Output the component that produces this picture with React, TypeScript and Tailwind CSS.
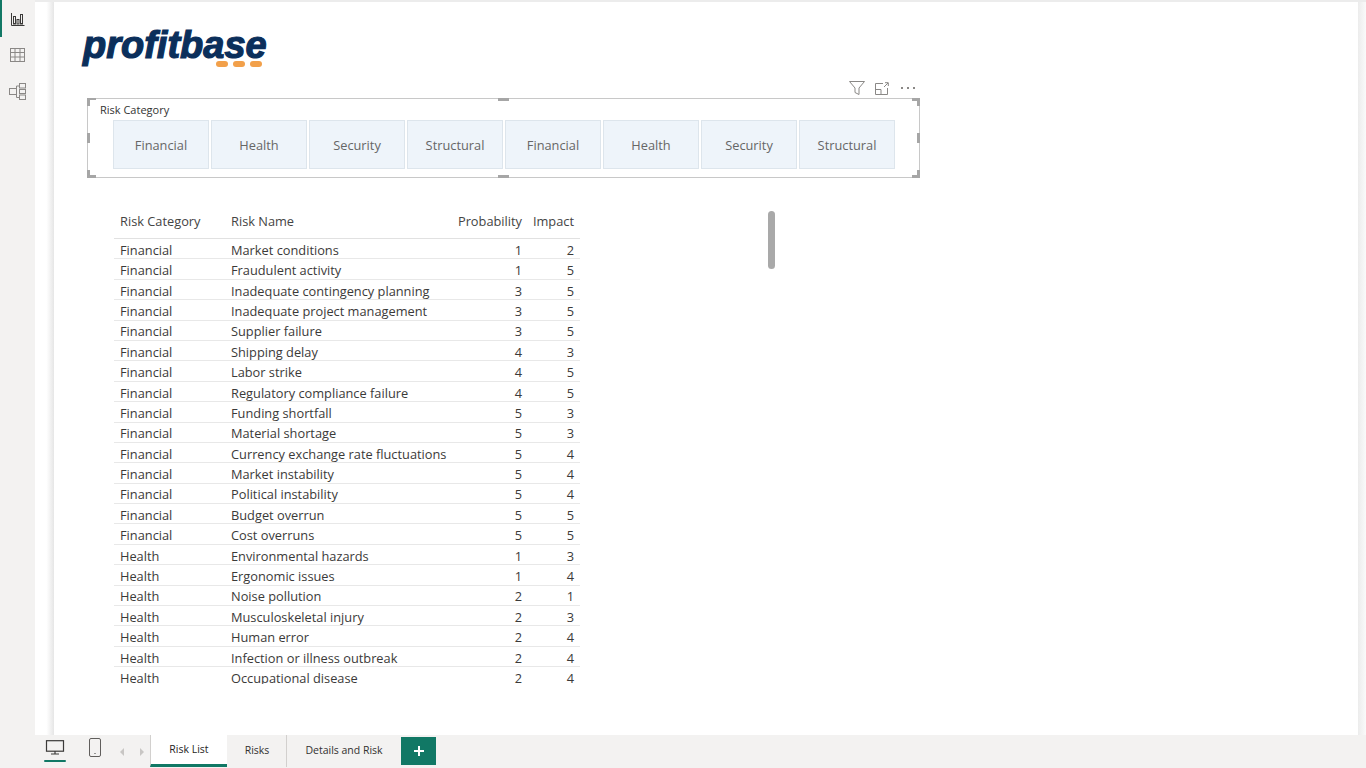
import React from "react";

const rows: [string, string, number, number][] = [
  ["Financial", "Market conditions", 1, 2],
  ["Financial", "Fraudulent activity", 1, 5],
  ["Financial", "Inadequate contingency planning", 3, 5],
  ["Financial", "Inadequate project management", 3, 5],
  ["Financial", "Supplier failure", 3, 5],
  ["Financial", "Shipping delay", 4, 3],
  ["Financial", "Labor strike", 4, 5],
  ["Financial", "Regulatory compliance failure", 4, 5],
  ["Financial", "Funding shortfall", 5, 3],
  ["Financial", "Material shortage", 5, 3],
  ["Financial", "Currency exchange rate fluctuations", 5, 4],
  ["Financial", "Market instability", 5, 4],
  ["Financial", "Political instability", 5, 4],
  ["Financial", "Budget overrun", 5, 5],
  ["Financial", "Cost overruns", 5, 5],
  ["Health", "Environmental hazards", 1, 3],
  ["Health", "Ergonomic issues", 1, 4],
  ["Health", "Noise pollution", 2, 1],
  ["Health", "Musculoskeletal injury", 2, 3],
  ["Health", "Human error", 2, 4],
  ["Health", "Infection or illness outbreak", 2, 4],
  ["Health", "Occupational disease", 2, 4],
];

const slicerItems = ["Financial", "Health", "Security", "Structural", "Financial", "Health", "Security", "Structural"];

function RailIcons() {
  return (
    <div className="relative w-[35px] shrink-0 bg-[#f3f2f1]">
      <div className="flex h-[37px] items-center justify-center border-l-2 border-[#117865] pr-[2px]">
        <svg width="14" height="14" viewBox="0 0 14 14" fill="none" stroke="#3b3a39" strokeWidth="1">
          <path d="M.5 1v12.5h13" />
          <rect x="2.5" y="4.5" width="2" height="7.5" />
          <rect x="6" y="7.5" width="2" height="4.5" />
          <rect x="9.5" y="2.5" width="2" height="9.5" />
        </svg>
      </div>
      <div className="flex h-[36px] items-center justify-center">
        <svg width="15" height="14" viewBox="0 0 15 14" fill="none" stroke="#8a8886" strokeWidth="1">
          <rect x=".5" y=".5" width="14" height="13" />
          <path d="M.5 4.5h14M.5 9h14M5 .5v13M10 .5v13" />
        </svg>
      </div>
      <div className="flex h-[36px] items-center justify-center">
        <svg width="17" height="17" viewBox="0 0 17 17" fill="none" stroke="#8a8886" strokeWidth="1">
          <rect x=".5" y="5.5" width="7" height="6" />
          <rect x="10.5" y=".5" width="6" height="4.5" />
          <rect x="10.5" y="6.5" width="6" height="4" />
          <rect x="10.5" y="12" width="6" height="4.5" />
          <path d="M7.5 3h3M7.5 3v2.5M7.5 11.5v3h3" />
        </svg>
      </div>
    </div>
  );
}

function Logo() {
  return (
    <div className="ml-[29px] flex h-[48px] w-[190px] flex-col">
      <span className="h-[38px] text-[38px] leading-[38px] font-bold italic text-[#0b2f5b] [-webkit-text-stroke:1.2px_#0b2f5b] [font-family:'Liberation_Sans',sans-serif]">
        profitbase
      </span>
      <div className="mt-[-3px] ml-[133px] flex gap-[5px]">
        <div className="h-[6px] w-[12px] rounded-full bg-[#f2a04a]" />
        <div className="h-[6px] w-[12px] rounded-full bg-[#f2a04a]" />
        <div className="h-[6px] w-[12px] rounded-full bg-[#f2a04a]" />
      </div>
    </div>
  );
}

function Handle({ className }: { className: string }) {
  return <div className={`absolute bg-[#a6a6a6] ${className}`} />;
}

function Slicer() {
  return (
    <div className="ml-[33px] w-[833px]">
      <div className="flex h-[17px] items-start justify-end pr-[5px]">
        <svg width="16" height="14" viewBox="0 0 16 14" fill="none" stroke="#8a8886" strokeWidth="1">
          <path d="M.5.5h15L10 7v6.5l-4-2V7z" />
        </svg>
        <svg width="14" height="13" viewBox="0 0 14 13" fill="none" stroke="#8a8886" strokeWidth="1" className="mt-[1px] ml-[10px]">
          <path d="M8 1.5H.5v11h12V6M.5 7.5H6v5M9 5l4-4M10 .7h3.3V4" />
        </svg>
        <div className="mt-[6px] ml-[12px] flex gap-[4px]">
          <div className="h-[2px] w-[2px] bg-[#8a8886]" />
          <div className="h-[2px] w-[2px] bg-[#8a8886]" />
          <div className="h-[2px] w-[2px] bg-[#8a8886]" />
        </div>
      </div>
      <div className="relative h-[80px] border border-[#c8c8c8] pl-[12px] pt-[4px]">
        <Handle className="-left-[1px] -top-[1px] h-[2px] w-[9px]" />
        <Handle className="-left-[1px] -top-[1px] h-[8px] w-[3px]" />
        <Handle className="-right-[1px] -top-[1px] h-[3px] w-[8px]" />
        <Handle className="-right-[1px] -top-[1px] h-[8px] w-[3px]" />
        <Handle className="-left-[1px] -bottom-[1px] h-[3px] w-[9px]" />
        <Handle className="-left-[1px] -bottom-[1px] h-[8px] w-[3px]" />
        <Handle className="-right-[1px] -bottom-[1px] h-[3px] w-[8px]" />
        <Handle className="-right-[1px] -bottom-[1px] h-[8px] w-[3px]" />
        <Handle className="left-[410px] -top-[1px] h-[3px] w-[11px]" />
        <Handle className="left-[410px] -bottom-[1px] h-[3px] w-[11px]" />
        <Handle className="-left-[1px] top-[34px] h-[10px] w-[3px]" />
        <Handle className="-right-[1px] top-[34px] h-[10px] w-[3px]" />
        <div className="text-[11px] leading-[14px] text-[#333333]">Risk Category</div>
        <div className="mt-[3px] ml-[13px] flex gap-[2px]">
          {slicerItems.map((item, i) => (
            <div
              key={i}
              className="flex h-[49px] w-[96px] items-center justify-center border border-[#dde5ec] bg-[#eef4fa] pt-[2px] text-[12.8px] text-[#666666]"
            >
              {item}
            </div>
          ))}
        </div>
      </div>
    </div>
  );
}

function RiskTable() {
  return (
    <div className="mt-[33px] ml-[60px] flex items-start">
      <div className="h-[473px] w-[466px] overflow-hidden text-[12.8px] text-[#3b3a39]">
        <div className="flex h-[28px] items-center border-b border-[#e1e1e1] pb-[5px] pl-[6px] pr-[6px] text-[#444444]">
          <div className="w-[111px]">Risk Category</div>
          <div className="flex-1">Risk Name</div>
          <div className="w-[65px] whitespace-nowrap text-right">Probability</div>
          <div className="w-[52px] text-right">Impact</div>
        </div>
        {rows.map(([cat, name, prob, impact], i) => (
          <div key={i} className="flex h-[20.4px] items-center border-b border-[#e8e8e8] pl-[6px] pr-[6px] pt-[3px] leading-none">
            <div className="w-[111px]">{cat}</div>
            <div className="flex-1 whitespace-nowrap">{name}</div>
            <div className="w-[65px] text-right">{prob}</div>
            <div className="w-[52px] text-right">{impact}</div>
          </div>
        ))}
      </div>
      <div className="ml-[188px] h-[58px] w-[7px] rounded-full bg-[#a9a9a9]" />
    </div>
  );
}

function BottomBar() {
  return (
    <div className="flex h-[33px] shrink-0 items-stretch bg-[#f3f2f1] pl-[44px] text-[10.5px] text-[#323130]">
      <div className="flex w-[22px] flex-col items-center pt-[5px]">
        <svg width="20" height="15" viewBox="0 0 20 15" fill="none" stroke="#3b3a39" strokeWidth="1.2">
          <rect x="1.5" y=".7" width="17" height="10.5" />
          <path d="M10 11v3M6 14h8" />
        </svg>
        <div className="mt-[5px] h-[2px] w-[22px] rounded-full bg-[#117865]" />
      </div>
      <div className="ml-[23px] flex w-[12px] items-start pt-[3px]">
        <svg width="12" height="19" viewBox="0 0 12 19" fill="none" stroke="#605e5c" strokeWidth="1">
          <rect x=".5" y=".5" width="11" height="18" rx="1.5" />
          <path d="M5.5 15.5h1" stroke="#3b3a39" />
        </svg>
      </div>
      <div className="ml-[19px] flex w-[8px] items-center text-[#c8c6c4]">
        <svg width="5" height="8" viewBox="0 0 5 8" fill="currentColor"><path d="M4 0v8L0 4z" /></svg>
      </div>
      <div className="ml-[11px] flex w-[11px] items-center text-[#c8c6c4]">
        <svg width="5" height="8" viewBox="0 0 5 8" fill="currentColor"><path d="M1 0v8l4-4z" /></svg>
      </div>
      <div className="mb-[1px] flex w-[77px] items-center justify-center border-b-[3px] border-l border-b-[#117865] border-l-[#d2d0ce] bg-white pt-[1px] text-[#252423]">
        Risk List
      </div>
      <div className="mb-[1px] flex w-[60px] items-center justify-center border-r border-[#d2d0ce] pl-[1px]">Risks</div>
      <div className="mb-[1px] flex w-[114px] items-center justify-center">Details and Risk</div>
      <div className="mt-[2px] mb-[3px] flex w-[35px] items-center justify-center bg-[#117865]">
        <svg width="10" height="10" viewBox="0 0 10 10" fill="#ffffff"><path d="M4 0h2v4h4v2H6v4H4V6H0V4h4z" /></svg>
      </div>
    </div>
  );
}

export default function App() {
  return (
    <div className="flex h-[768px] w-[1366px] flex-col overflow-hidden bg-[#f3f2f1] [font-family:'Open_Sans',sans-serif]">
      <div className="flex min-h-0 flex-1">
        <RailIcons />
        <div className="flex min-w-0 flex-1 flex-col">
          <div className="h-[2px] shrink-0 bg-[#ececec]" />
          <div className="flex min-h-0 flex-1">
            <div className="w-[19px] shrink-0 bg-gradient-to-r from-white from-60% to-[#e6e6e6]" />
            <div className="min-w-0 flex-1 overflow-hidden bg-white pt-[24px]">
              <Logo />
              <div className="mt-[7px]">
                <Slicer />
              </div>
              <RiskTable />
            </div>
            <div className="w-[8px] shrink-0 bg-gradient-to-r from-[#ececec] to-[#fafafa]" />
          </div>
        </div>
      </div>
      <BottomBar />
    </div>
  );
}
